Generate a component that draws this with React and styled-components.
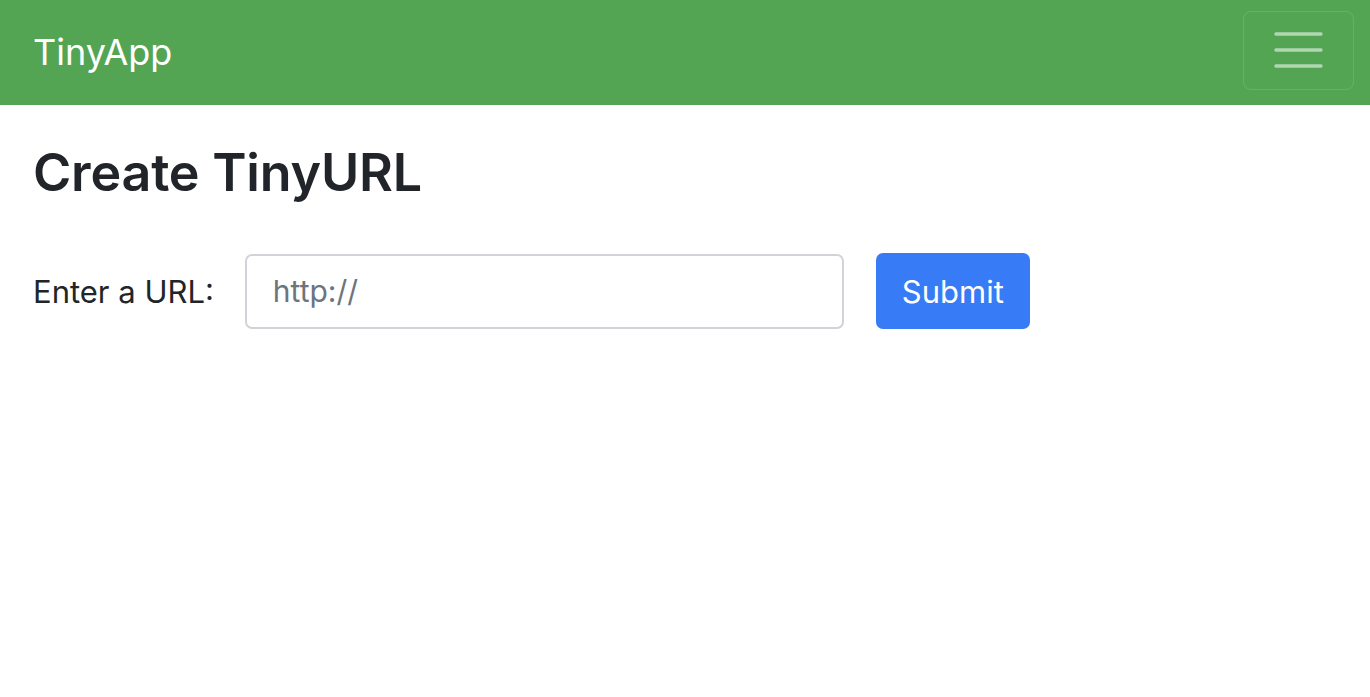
import React from "react";
import styled, { createGlobalStyle } from "styled-components";

const Global = createGlobalStyle`
  html, body { margin: 0; padding: 0; background: #fff; }
  body {
    font-family: Inter, "Open Sans", "Liberation Sans", sans-serif;
    color: #212529;
  }
  * { box-sizing: border-box; }
`;

const NavBar = styled.nav`
  height: 105px;
  background: #53a553;
  display: flex;
  align-items: center;
  justify-content: space-between;
  padding: 0 16px 0 33px;
`;

const Brand = styled.a`
  color: #fff;
  font-size: 36px;
  font-weight: 400;
  text-decoration: none;
  margin-top: -2px;
`;

const Toggler = styled.button`
  width: 111px;
  height: 79px;
  margin-top: -5px;
  background: transparent;
  border: 1.5px solid rgba(255, 255, 255, 0.12);
  border-radius: 8px;
  display: flex;
  align-items: center;
  justify-content: center;
  padding: 0;
`;

const Main = styled.main`
  padding: 0 33px;
`;

const Title = styled.h1`
  margin: 37px 0 49px;
  font-size: 52px;
  font-weight: 600;
  line-height: 1.2;
  letter-spacing: -0.2px;
`;

const Form = styled.form`
  display: flex;
  align-items: center;
`;

const Label = styled.label`
  font-size: 31px;
  margin-right: 31px;
`;

const Input = styled.input`
  width: 599px;
  height: 75px;
  border: 2px solid #d0d4d8;
  border-radius: 7px;
  padding: 0 26px;
  font-family: inherit;
  font-size: 30px;
  color: #212529;
  outline: none;
  &::placeholder { color: #6c757d; }
`;

const Button = styled.button`
  margin-left: 32px;
  width: 154px;
  height: 76px;
  background: #377bf6;
  color: #fff;
  border: none;
  border-radius: 7px;
  font-family: inherit;
  font-size: 31px;
  padding: 0;
`;

export default function App() {
  return (
    <>
      <Global />
      <NavBar>
        <Brand href="#">TinyApp</Brand>
        <Toggler aria-label="menu">
          <svg width="50" height="38" viewBox="0 0 50 38">
            <g stroke="rgba(255,255,255,0.55)" strokeWidth="3.5" strokeLinecap="round">
              <line x1="2" y1="3" x2="47" y2="3" />
              <line x1="2" y1="19" x2="47" y2="19" />
              <line x1="2" y1="35" x2="47" y2="35" />
            </g>
          </svg>
        </Toggler>
      </NavBar>
      <Main>
        <Title>Create TinyURL</Title>
        <Form onSubmit={(e) => e.preventDefault()}>
          <Label>Enter a URL:</Label>
          <Input type="text" placeholder="http://" />
          <Button type="submit">Submit</Button>
        </Form>
      </Main>
    </>
  );
}
